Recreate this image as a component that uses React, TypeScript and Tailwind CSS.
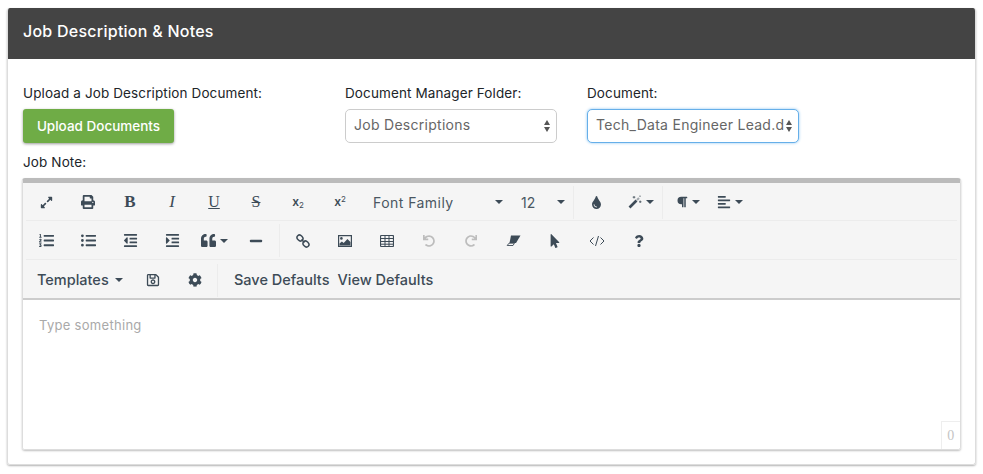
import type { ReactNode } from "react";
import {
    FaAlignLeft,
    FaCog,
    FaExpandAlt,
    FaIndent,
    FaListOl,
    FaListUl,
    FaMinus,
    FaMousePointer,
    FaOutdent,
    FaParagraph,
    FaPrint,
    FaQuestion,
    FaQuoteLeft,
    FaRedo,
    FaRegSave,
    FaTint,
    FaUndo,
} from "react-icons/fa";

const Caret = () => (
    <span className="inline-block h-0 w-0 border-x-[4px] border-t-[4px] border-x-transparent border-t-[#3d4b57]" />
);

const Tool = ({ children, caret, muted }: { children: ReactNode; caret?: boolean; muted?: boolean }) => (
    <div className={`flex h-full w-[42px] shrink-0 items-center justify-center gap-1 text-[14px] ${muted ? "text-[#bdbdbd]" : "text-[#3d4b57]"}`}>
        {children}
        {caret && <Caret />}
    </div>
);

const Divider = () => <div className="h-[33px] w-px shrink-0 self-center bg-[#ececec]" />;

const SelectBox = ({ value, focused }: { value: string; focused?: boolean }) => (
    <div
        className={`relative h-[34px] w-[212px] overflow-hidden rounded-[5px] border bg-white pl-[8px] pr-[10px] text-[14px] leading-[30px] tracking-[0.28px] text-[#666] ${
            focused ? "border-[#66afe9] shadow-[0_0_3px_#8cc4f0]" : "border-[#ccc]"
        }`}
    >
        <div className="overflow-hidden whitespace-nowrap pr-[4px]">{value}</div>
        <div className="absolute right-[4px] top-0 flex h-full w-[10px] flex-col items-center justify-center gap-[2px] bg-white">
            <span className="h-0 w-0 border-x-[3.5px] border-b-[5px] border-x-transparent border-b-[#555]" />
            <span className="h-0 w-0 border-x-[3.5px] border-t-[5px] border-x-transparent border-t-[#555]" />
        </div>
    </div>
);

export default function App() {
    return (
        <div className="h-[474px] w-[983px] overflow-hidden bg-white pl-[7px] pt-[8px] font-['Inter',sans-serif] text-[#212529]">
            <div className="h-[457px] w-[969px] overflow-hidden rounded-[3px] border-x border-b border-[#ddd] shadow-[0_1px_2px_rgba(0,0,0,0.3)]">
                <div className="flex h-[51px] items-center bg-[#444] px-[15px] pb-[6px] text-[16px] font-medium tracking-[0.25px] text-white">
                    Job Description &amp; Notes
                </div>

                <div className="px-[15px] pt-[26px]">
                    <div className="flex">
                        <div className="w-[322px]">
                            <div className="text-[13.5px] leading-[16px] tracking-[0.12px]">Upload a Job Description Document:</div>
                            <button className="mt-[8px] h-[34px] w-[151px] rounded-[3px] bg-[#6fac46] text-[13.5px] font-medium text-white shadow-[0_1px_3px_rgba(0,0,0,0.4)]">
                                Upload Documents
                            </button>
                        </div>
                        <div className="w-[242px]">
                            <div className="text-[13.5px] leading-[16px] tracking-[0.12px]">Document Manager Folder:</div>
                            <div className="mt-[8px]">
                                <SelectBox value="Job Descriptions" />
                            </div>
                        </div>
                        <div>
                            <div className="text-[13.5px] leading-[16px] tracking-[0.12px]">Document:</div>
                            <div className="mt-[8px]">
                                <SelectBox value="Tech_Data Engineer Lead.docx" focused />
                            </div>
                        </div>
                    </div>

                    <div className="mt-[11px] text-[13.5px] leading-[16px] tracking-[0.12px]">Job Note:</div>

                    <div className="-ml-px mt-[8px] h-[272px] w-[939px] overflow-hidden rounded-[3px] border-x border-b border-[#ddd] border-t-[5px] border-t-[#bbb] shadow-[0_1px_2px_rgba(0,0,0,0.25)]">
                        <div className="border-b-2 border-[#ccc] bg-[#f5f5f5]">
                            <div className="mx-[3px] h-[38px] border-b border-[#ececec]">
                                <div className="-ml-[1px] flex h-full items-center pt-[1px]">
                                    <Tool><FaExpandAlt className="text-[13px]" /></Tool>
                                    <Tool><FaPrint /></Tool>
                                    <Tool><span className="font-['Liberation_Serif',serif] text-[17px] font-bold">B</span></Tool>
                                    <Tool><span className="font-['Liberation_Serif',serif] text-[17px] italic">I</span></Tool>
                                    <Tool><span className="font-['Liberation_Serif',serif] text-[16px] underline">U</span></Tool>
                                    <Tool><span className="font-['Liberation_Serif',serif] text-[16px] line-through">S</span></Tool>
                                    <Tool><span className="text-[12px] font-semibold">x<sub className="text-[8px] font-normal">2</sub></span></Tool>
                                    <Tool><span className="text-[12px] font-semibold">x<sup className="text-[8px] font-normal">2</sup></span></Tool>
                                    <div className="flex w-[149px] items-center pl-[12px] pr-[7px] text-[14px] tracking-[0.45px] text-[#4a5762]">
                                        <span className="flex-1">Font Family</span>
                                        <Caret />
                                    </div>
                                    <div className="flex w-[63px] items-center pl-[11px] pr-[8px] text-[14px] text-[#4a5762]">
                                        <span className="flex-1">12</span>
                                        <Caret />
                                    </div>
                                    <Divider />
                                    <div className="w-[1px]" />
                                    <Tool><FaTint className="text-[13px]" /></Tool>
                                    <div className="w-[3px]" />
                                    <Tool caret>
                                        <svg width="14" height="14" viewBox="0 0 14 14" fill="none" stroke="currentColor">
                                            <path d="M1.5 12.5 8.5 5.5" strokeWidth="2.6" />
                                            <path d="M9 5l2-2" strokeWidth="2.2" opacity="0.45" />
                                            <path d="M6 1v2.5M4.7 2.2h2.6M12.2 5.5v2.5M11 6.8h2.5M12 0.5v1.5" strokeWidth="0.8" />
                                        </svg>
                                    </Tool>
                                    <Divider />
                                    <div className="w-[4px]" />
                                    <Tool caret><FaParagraph className="text-[12px]" /></Tool>
                                    <Tool caret><FaAlignLeft /></Tool>
                                </div>
                            </div>
                            <div className="mx-[3px] h-[39px] border-b border-[#ececec]">
                                <div className="-ml-[1px] flex h-full items-center pt-[1px]">
                                    <Tool><FaListOl className="text-[15px]" /></Tool>
                                    <Tool><FaListUl className="text-[15px]" /></Tool>
                                    <Tool><FaOutdent className="text-[15px]" /></Tool>
                                    <Tool><FaIndent className="text-[15px]" /></Tool>
                                    <Tool caret><FaQuoteLeft className="text-[15px]" /></Tool>
                                    <Tool><FaMinus /></Tool>
                                    <div className="w-[2px]" />
                                    <Divider />
                                    <div className="w-[2px]" />
                                    <Tool>
                                        <svg width="14" height="14" viewBox="0 0 14 14" fill="none" stroke="currentColor" strokeWidth="1.5">
                                            <ellipse cx="4" cy="4" rx="3.2" ry="2.6" transform="rotate(45 4 4)" />
                                            <ellipse cx="10" cy="10" rx="3.2" ry="2.6" transform="rotate(45 10 10)" />
                                            <path d="M5.5 5.5 8.5 8.5" />
                                        </svg>
                                    </Tool>
                                    <Tool>
                                        <svg width="14" height="12" viewBox="0 0 14 12" fill="currentColor">
                                            <path d="M0.6 0.6h12.8v10.8H0.6z" fill="none" stroke="currentColor" strokeWidth="1.2" />
                                            <circle cx="3.4" cy="3.4" r="1.3" />
                                            <path d="M1.5 10.5V8.4l2.4-2 1.8 1.5L9.4 4l3.1 3v3.5z" />
                                        </svg>
                                    </Tool>
                                    <Tool>
                                        <svg width="14" height="12" viewBox="0 0 14 12" fill="none" stroke="currentColor" strokeWidth="1">
                                            <rect x="0.5" y="0.5" width="13" height="11" rx="1" strokeWidth="1.2" />
                                            <path d="M0.5 3.5h13M0.5 6.5h13M0.5 9.2h13M5 0.5v11M9 0.5v11" />
                                        </svg>
                                    </Tool>
                                    <Tool muted><FaUndo className="text-[12px]" /></Tool>
                                    <Tool muted><FaRedo className="text-[12px]" /></Tool>
                                    <Tool>
                                        <svg width="15" height="11" viewBox="0 0 15 11" fill="currentColor">
                                            <path d="M5 0.5h9.5L10 8H3.5z" />
                                            <path d="M3 8.2h5.4L7 10.5H1.2z" fill="none" stroke="currentColor" strokeWidth="0.9" />
                                        </svg>
                                    </Tool>
                                    <Tool><FaMousePointer className="text-[14px]" /></Tool>
                                    <Tool>
                                        <svg width="16" height="12" viewBox="0 0 16 12" fill="none" stroke="currentColor" strokeWidth="1">
                                            <path d="M4.5 2.5 1 6l3.5 3.5M11.5 2.5 15 6l-3.5 3.5M9.5 1l-3 10" />
                                        </svg>
                                    </Tool>
                                    <Tool><FaQuestion className="text-[12px]" /></Tool>
                                </div>
                            </div>
                            <div className="flex h-[38px] items-center pl-[4px] pt-[2px]">
                                <div className="flex w-[105px] items-center gap-[6px] pl-[10px] text-[14.5px] font-medium text-[#3d4b57]">
                                    Templates
                                    <Caret />
                                </div>
                                <Tool><FaRegSave /></Tool>
                                <Tool><FaCog /></Tool>
                                <div className="w-[1px]" />
                                <Divider />
                                <div className="ml-[16px] text-[14.5px] font-medium text-[#3d4b57]">Save Defaults</div>
                                <div className="ml-[8px] text-[14.5px] font-medium text-[#3d4b57]">View Defaults</div>
                            </div>
                        </div>
                        <div className="relative h-[149px] bg-white pl-[16px] pt-[16px] text-[13px] leading-[18px] tracking-[0.3px] text-[#a9a9a9]">
                            Type something
                            <div className="absolute bottom-0 right-0 flex h-[28px] w-[19px] items-center justify-center border-l border-t border-[#eee] font-['Liberation_Serif',serif] text-[14px] text-[#c4c4c4]">
                                0
                            </div>
                        </div>
                    </div>
                </div>
            </div>
        </div>
    );
}
